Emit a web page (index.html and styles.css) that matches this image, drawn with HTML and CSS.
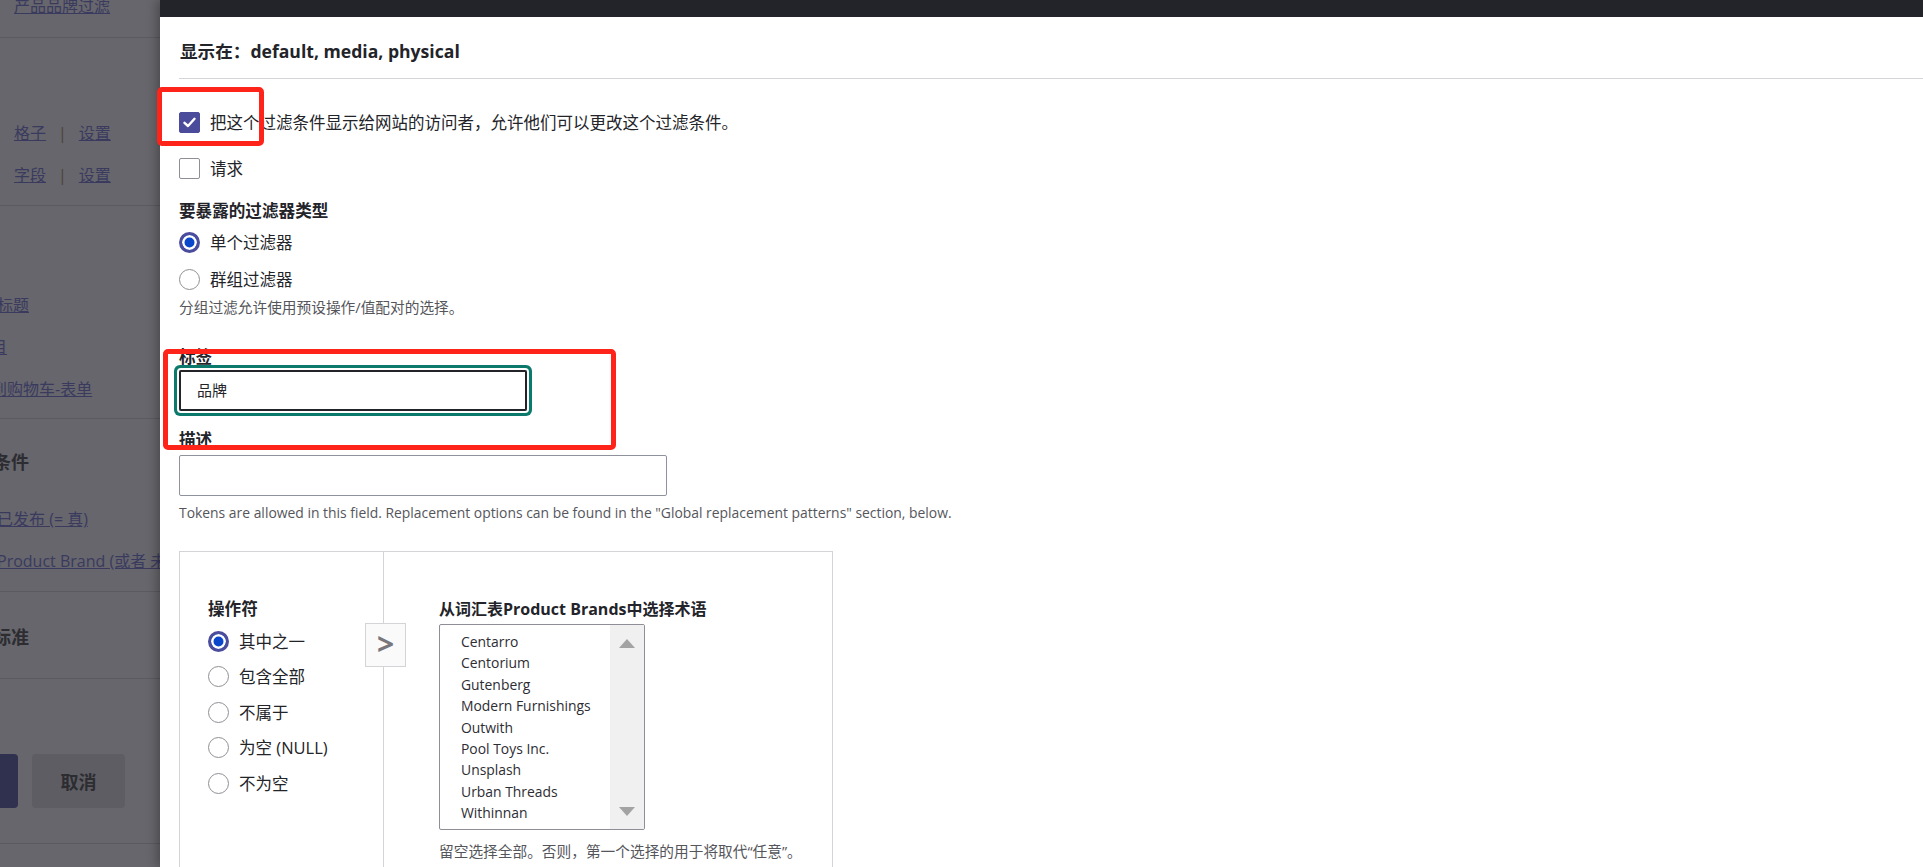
FILE: index.html
```html
<!DOCTYPE html>
<html lang="zh-CN">
<head>
    <meta charset="UTF-8">
    <meta name="viewport" content="width=device-width, initial-scale=1.0">
    <title>配置过滤条件</title>
    <link rel="stylesheet" href="styles.css">
</head>
<body>
    <div class="page">
        <div class="bg-row bg-top"><a class="bg-link">产品品牌过滤</a></div>
        <div class="bg-rule rule-1"></div>
        <div class="bg-row bg-format"><a class="bg-link">格子</a><span class="bg-sep">|</span><a class="bg-link">设置</a></div>
        <div class="bg-row bg-format-2"><a class="bg-link">字段</a><span class="bg-sep">|</span><a class="bg-link">设置</a></div>
        <div class="bg-rule rule-2"></div>
        <div class="bg-col">
            <div class="bg-row bg-title"><a class="bg-link">标题</a></div>
            <div class="bg-row bg-gap nudge"><a class="bg-link">目</a></div>
            <div class="bg-row bg-gap nudge"><a class="bg-link">到购物车-表单</a></div>
        </div>
        <div class="bg-rule rule-3"></div>
        <div class="bg-col">
            <div class="bg-heading bg-filters">条件</div>
            <div class="bg-row bg-published"><a class="bg-link">已发布 (= 真)</a></div>
            <div class="bg-row bg-gap"><a class="bg-link">Product Brand (或者 未设置)</a></div>
        </div>
        <div class="bg-rule rule-4"></div>
        <div class="bg-col">
            <div class="bg-heading bg-sort">标准</div>
        </div>
        <div class="bg-rule rule-5"></div>
        <div class="bg-actions">
            <span class="bg-button bg-primary">应用</span>
            <span class="bg-button bg-cancel">取消</span>
        </div>
        <div class="bg-rule rule-6"></div>
    </div>

    <div class="dialog">
        <div class="dialog-titlebar"></div>
        <div class="dialog-content">
            <h3 class="display-on">显示在：default, media, physical</h3>

            <div class="check-row first">
                <span class="checkbox is-checked">
                    <svg width="13" height="11" viewBox="0 0 13 11"><polyline points="1.5,5.8 5,9 11.5,1.8" fill="none" stroke="#fff" stroke-width="2.4" stroke-linecap="round" stroke-linejoin="round"/></svg>
                </span>
                <span>把这个过滤条件显示给网站的访问者，允许他们可以更改这个过滤条件。</span>
            </div>
            <div class="check-row">
                <span class="checkbox"></span>
                <span>请求</span>
            </div>

            <div class="form-label expose-type">要暴露的过滤器类型</div>
            <div class="radio-row first">
                <span class="radio is-checked"></span>
                <span>单个过滤器</span>
            </div>
            <div class="radio-row second">
                <span class="radio"></span>
                <span>群组过滤器</span>
            </div>
            <div class="description">分组过滤允许使用预设操作/值配对的选择。</div>

            <div class="form-label label-title">标签</div>
            <div class="text-input is-focused">品牌</div>

            <div class="form-label desc-title">描述</div>
            <div class="text-input wide"></div>
            <div class="description latin">Tokens are allowed in this field. Replacement options can be found in the "Global replacement patterns" section, below.</div>

            <div class="operator-box">
                <div class="operator-col">
                    <div class="form-label">操作符</div>
                    <div class="radio-row op first">
                        <span class="radio is-checked"></span>
                        <span>其中之一</span>
                    </div>
                    <div class="radio-row op">
                        <span class="radio"></span>
                        <span>包含全部</span>
                    </div>
                    <div class="radio-row op">
                        <span class="radio"></span>
                        <span>不属于</span>
                    </div>
                    <div class="radio-row op">
                        <span class="radio"></span>
                        <span>为空 (NULL)</span>
                    </div>
                    <div class="radio-row op">
                        <span class="radio"></span>
                        <span>不为空</span>
                    </div>
                </div>
                <div class="add-button">&gt;</div>
                <div class="terms-col">
                    <div class="form-label">从词汇表Product Brands中选择术语</div>
                    <div class="term-list">
                        <div class="term-options">
                            <div>Centarro</div>
                            <div>Centorium</div>
                            <div>Gutenberg</div>
                            <div>Modern Furnishings</div>
                            <div>Outwith</div>
                            <div>Pool Toys Inc.</div>
                            <div>Unsplash</div>
                            <div>Urban Threads</div>
                            <div>Withinnan</div>
                        </div>
                        <div class="term-scroll">
                            <svg width="16" height="9" viewBox="0 0 16 9"><polygon points="8,0 16,9 0,9" fill="#a3a3a3"/></svg>
                            <svg width="16" height="9" viewBox="0 0 16 9"><polygon points="0,0 16,0 8,9" fill="#a3a3a3"/></svg>
                        </div>
                    </div>
                    <div class="description">留空选择全部。否则，第一个选择的用于将取代“任意”。</div>
                </div>
            </div>
        </div>
    </div>

    <div class="annotation mark-expose"></div>
    <div class="annotation mark-label"></div>
</body>
</html>
```

FILE: styles.css
```css
* {
    box-sizing: border-box;
}
html, body {
    margin: 0;
    height: 100%;
}
body {
    position: relative;
    overflow: hidden;
    font-family: "Open Sans", "Noto Sans CJK SC", sans-serif;
    color: #232429;
    background-color: #66666c;
}

/* page behind the dialog */
.page {
    font-size: 16px;
    color: #2c2c31;
}
.bg-row {
    line-height: 20px;
    white-space: nowrap;
}
.bg-link {
    color: #3a3a5f;
    text-decoration: underline;
}
.bg-sep {
    color: #4d4339;
    margin: 0 12px;
}
.bg-rule {
    height: 1px;
    background-color: #5a5a60;
}
.bg-top {
    margin-top: -4px;
    padding-left: 14px;
}
.rule-1 {
    margin-top: 21px;
}
.bg-format {
    margin-top: 85px;
    padding-left: 14px;
}
.bg-format-2 {
    margin-top: 22px;
    padding-left: 14px;
}
.rule-2 {
    margin-top: 20px;
}
.bg-col {
    margin-left: -3px;
}
.bg-title {
    margin-top: 89px;
}
.bg-gap {
    margin-top: 22px;
}
.nudge {
    margin-left: -6px;
}
.rule-3 {
    margin-top: 19px;
}
.bg-heading {
    font-size: 18px;
    line-height: 24px;
    font-weight: 700;
    margin-left: -4px;
}
.bg-filters {
    margin-top: 31px;
}
.bg-published {
    margin-top: 35px;
}
.rule-4 {
    margin-top: 20px;
}
.bg-sort {
    margin-top: 33px;
}
.rule-5 {
    margin-top: 29px;
}
.bg-actions {
    display: flex;
    gap: 14px;
    margin-top: 75px;
    margin-left: -80px;
}
.bg-button {
    display: flex;
    align-items: center;
    justify-content: center;
    height: 54px;
    border-radius: 4px;
    font-size: 18px;
    font-weight: 700;
}
.bg-primary {
    width: 98px;
    background-color: #30304f;
    color: #5b5b75;
}
.bg-cancel {
    width: 93px;
    background-color: #5d5d63;
    color: #2c2c31;
}
.rule-6 {
    margin-top: 35px;
}

/* dialog */
.dialog {
    position: absolute;
    top: 0;
    left: 160px;
    right: 0;
    bottom: 0;
    background-color: #fff;
    box-shadow: -3px 0 10px rgba(0, 0, 0, 0.3);
    overflow: hidden;
}
.dialog-titlebar {
    height: 17px;
    background-color: #232429;
}
.dialog-content {
    padding-left: 19px;
}
.display-on {
    margin: 0;
    padding: 22px 0 15px 1px;
    font-size: 17.6px;
    line-height: 24px;
    font-weight: 700;
    border-bottom: 1px solid #d4d4d8;
}

.check-row {
    display: flex;
    align-items: center;
    gap: 10px;
    font-size: 16.5px;
    line-height: 21px;
    margin-top: 25px;
}
.check-row.first {
    margin-top: 33px;
}
.checkbox {
    flex: none;
    display: flex;
    align-items: center;
    justify-content: center;
    width: 21px;
    height: 21px;
    border: 1px solid #8e8e96;
    border-radius: 2px;
}
.checkbox.is-checked {
    background-color: #4b4b9c;
    border-color: #4b4b9c;
}

.form-label {
    font-size: 16.6px;
    line-height: 20px;
    font-weight: 700;
    white-space: nowrap;
}
.expose-type {
    margin-top: 22px;
}
.radio-row {
    display: flex;
    align-items: center;
    gap: 10px;
    font-size: 16.5px;
    line-height: 21px;
    white-space: nowrap;
}
.radio-row.first {
    margin-top: 11px;
}
.radio-row.second {
    margin-top: 16px;
}
.radio {
    flex: none;
    width: 21px;
    height: 21px;
    border: 1px solid #909096;
    border-radius: 50%;
}
.radio.is-checked {
    border: 3px solid #4c4c9d;
    background-color: #0b47cb;
    box-shadow: inset 0 0 0 2.5px #fff;
}

.description {
    margin-top: 8px;
    font-size: 14.7px;
    line-height: 18px;
    color: #55565b;
    white-space: nowrap;
}
.description.latin {
    font-size: 13.9px;
}

.label-title {
    margin-top: 31px;
}
.desc-title {
    margin-top: 19px;
}
.text-input {
    width: 348px;
    height: 41px;
    margin-top: 3px;
    padding: 0 16px;
    border: 2px solid #232429;
    border-radius: 2px;
    font-size: 15px;
    line-height: 37px;
}
.text-input.is-focused {
    box-shadow: 0 0 0 2px #fff, 0 0 0 5px #0b7a6d;
}
.text-input.wide {
    width: 488px;
    margin-top: 5px;
    border: 1px solid #8e929c;
}

/* operator + terms */
.operator-box {
    display: flex;
    width: 654px;
    height: 400px;
    margin-top: 29px;
    border: 1px solid #d4d4d8;
}
.operator-col {
    flex: none;
    width: 204px;
    padding: 47px 0 0 28px;
    border-right: 1px solid #d4d4d8;
}
.radio-row.op {
    margin-top: 14.4px;
}
.radio-row.op.first {
    margin-top: 12px;
}
.add-button {
    flex: none;
    display: flex;
    align-items: center;
    justify-content: center;
    width: 41px;
    height: 44px;
    margin: 71px 0 0 -19px;
    border: 1px solid #d4d4d8;
    background-color: #fafafa;
    color: #77777c;
    font-size: 30px;
    font-weight: 700;
    line-height: 1;
    padding-bottom: 3px;
}
.terms-col {
    padding: 47px 0 0 33px;
}
.terms-col .form-label {
    font-size: 16px;
}
.term-list {
    display: flex;
    width: 206px;
    height: 206px;
    margin-top: 5px;
    border: 1px solid #8e8e96;
    border-radius: 2px;
    overflow: hidden;
}
.term-options {
    flex: 1;
    padding: 6px 0 0 21px;
    font-size: 13.9px;
    line-height: 21.4px;
    color: #2d2d33;
    white-space: nowrap;
}
.term-scroll {
    flex: none;
    display: flex;
    flex-direction: column;
    justify-content: space-between;
    align-items: center;
    width: 34px;
    padding: 14px 0 13px;
    background-color: #f0f0f0;
}
.terms-col .description {
    margin-top: 12px;
}

/* red annotation boxes drawn over the screenshot */
.annotation {
    position: absolute;
    border: 5px solid #ff2419;
    border-radius: 5px;
}
.mark-expose {
    left: 157px;
    top: 87px;
    width: 107px;
    height: 59px;
}
.mark-label {
    left: 163px;
    top: 349px;
    width: 453px;
    height: 101px;
}
```
